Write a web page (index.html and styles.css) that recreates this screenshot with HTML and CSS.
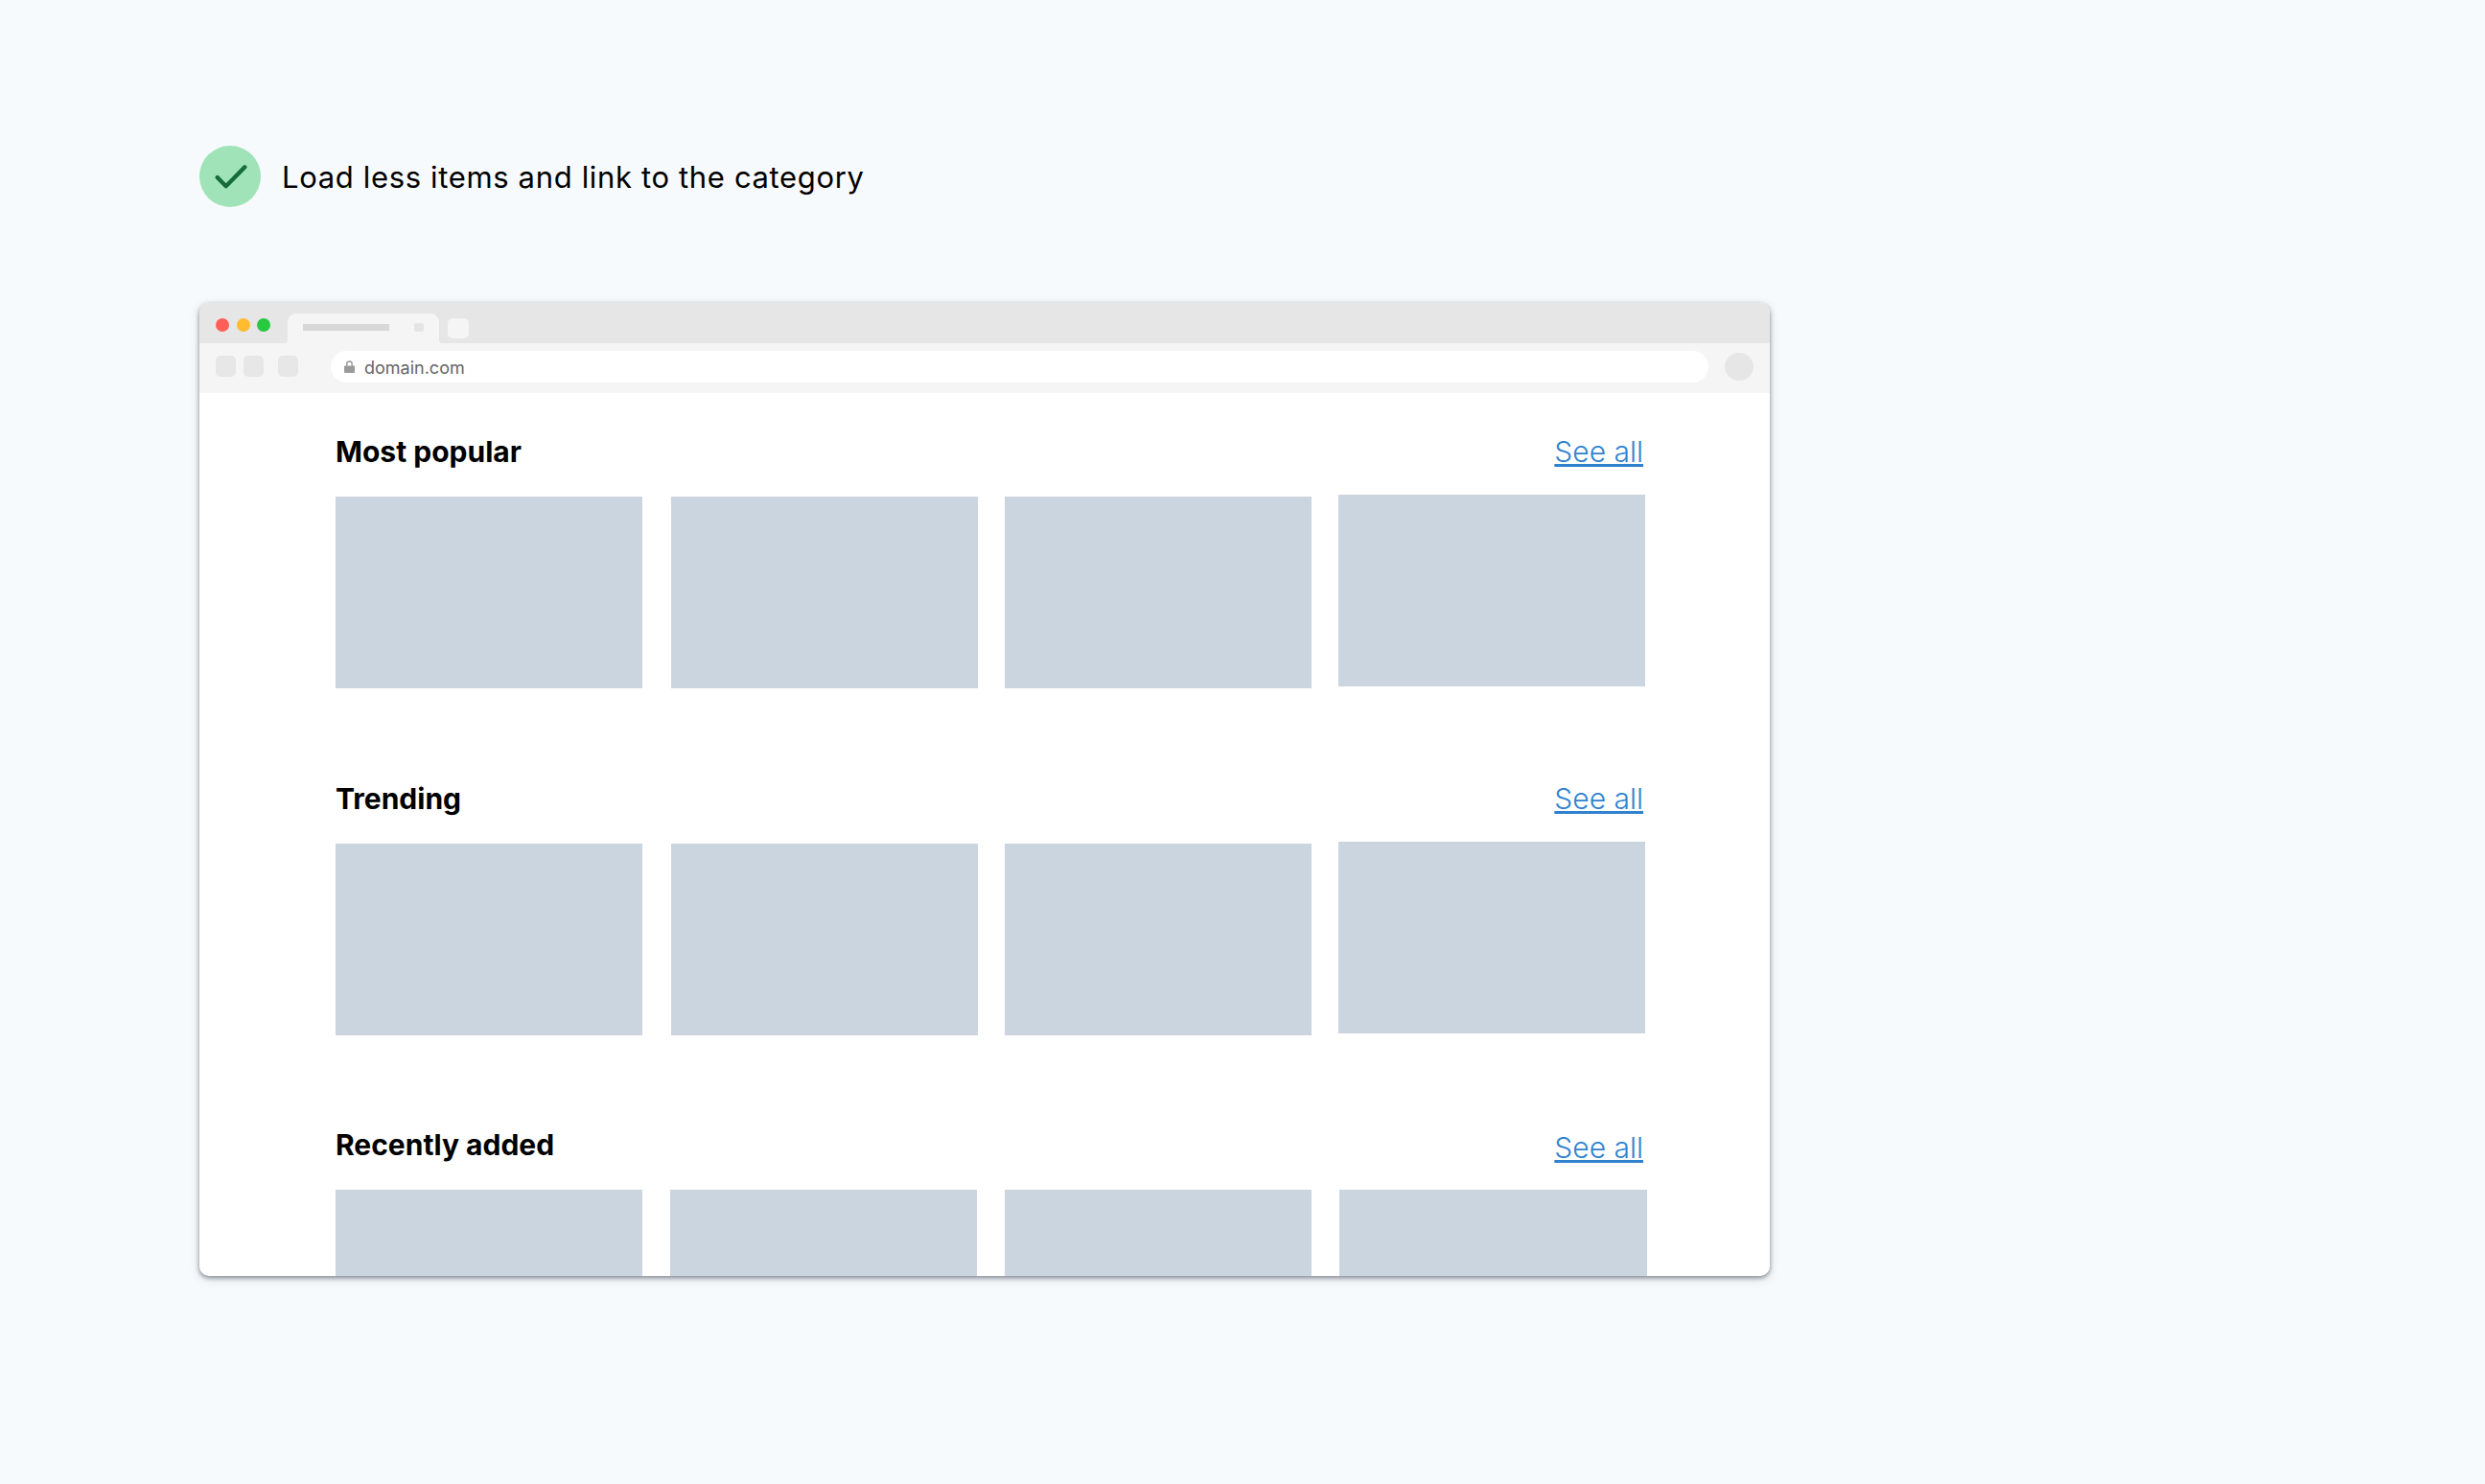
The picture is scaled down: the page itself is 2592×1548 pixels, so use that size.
FILE: index.html
```html
<!DOCTYPE html>
<html lang="en">
<head>
<meta charset="utf-8">
<title>Load less items and link to the category</title>
<link rel="stylesheet" href="styles.css">
</head>
<body>
<header class="caption">
  <span class="badge">
    <svg class="badge-icon" viewBox="0 0 64 64" width="64" height="64" aria-hidden="true"><path d="M18.700 33 L27.700 42.300 L47.300 22.300"/></svg>
  </span>
  <h1 class="caption-text">Load less items and link to the category</h1>
</header>
<main class="window">
  <div class="tabbar">
    <div class="dots"><i class="dot dot-red"></i><i class="dot dot-yellow"></i><i class="dot dot-green"></i></div>
    <div class="tab"><i class="tab-line"></i><i class="tab-close"></i></div>
    <i class="new-tab"></i>
  </div>
  <div class="toolbar">
    <i class="tool"></i><i class="tool"></i><i class="tool tool-last"></i>
    <div class="url">
      <svg class="lock" viewBox="0 0 11 13" width="11" height="13" aria-hidden="true"><path class="lock-body" d="M1 5.500h9a1 1 0 0 1 1 1V12a1 1 0 0 1-1 1H1a1 1 0 0 1-1-1V6.500a1 1 0 0 1 1-1z"/><path class="lock-shackle" d="M2.800 6V3.700a2.700 2.700 0 0 1 5.400 0V6"/></svg>
      <span class="url-text">domain.com</span>
    </div>
    <i class="avatar"></i>
  </div>
  <div class="content">
    <section class="section">
      <div class="section-head"><h2 class="section-title">Most popular</h2><a class="see-all" href="#">See all</a></div>
      <div class="tiles"><i class="tile"></i><i class="tile t2"></i><i class="tile t3"></i><i class="tile t4 raised"></i></div>
    </section>
    <section class="section section-tight">
      <div class="section-head"><h2 class="section-title">Trending</h2><a class="see-all" href="#">See all</a></div>
      <div class="tiles"><i class="tile"></i><i class="tile t2"></i><i class="tile t3"></i><i class="tile t4 raised"></i></div>
    </section>
    <section class="section">
      <div class="section-head"><h2 class="section-title">Recently added</h2><a class="see-all see-all-low" href="#">See all</a></div>
      <div class="tiles"><i class="tile"></i><i class="tile t2b"></i><i class="tile t3b"></i><i class="tile t4b"></i></div>
    </section>
  </div>
</main>
</body>
</html>
```
FILE: styles.css
```css
* { box-sizing: border-box; }
html, body { margin: 0; height: 100%; }
body {
  background: #f7fafc;
  font-family: Inter, "Liberation Sans", sans-serif;
  color: #000;
  padding: 152px 0 0 208px;
  overflow: hidden;
}
i { display: block; }

.caption { display: flex; align-items: center; gap: 22px; height: 64px; margin-bottom: 100px; }
.badge { width: 64px; height: 64px; border-radius: 50%; background: #a0e3b8; display: block; }
.badge-icon { display: block; fill: none; stroke: #146c3c; stroke-width: 4.300; stroke-linecap: round; stroke-linejoin: round; }
.caption-text { margin: 2px 0 0; font-size: 31px; font-weight: 400; letter-spacing: 0.65px; line-height: 40px; }

.window {
  width: 1638px;
  height: 1015px;
  background: #fff;
  border-radius: 10px;
  overflow: hidden;
  box-shadow: 0 2px 5px rgba(45, 55, 72, .55), 0 3px 12px rgba(45, 55, 72, .12);
  display: flex;
  flex-direction: column;
}
.tabbar { height: 42px; background: #e6e6e6; display: flex; align-items: flex-start; flex: none; }
.dots { display: flex; gap: 7.500px; padding: 16px 0 0 17px; width: 92px; }
.dot { width: 14px; height: 14px; border-radius: 50%; }
.dot-red { background: #ff5f57; }
.dot-yellow { background: #febc2e; }
.dot-green { background: #28c840; }
.tab {
  position: relative;
  margin-top: 11px;
  width: 158px;
  height: 31px;
  background: #f5f5f5;
  border-radius: 9px 9px 0 0;
  display: flex;
  padding: 11px 0 0 16px;
}
.tab::before, .tab::after {
  content: "";
  position: absolute;
  bottom: 0;
  width: 4px;
  height: 4px;
}
.tab::before { left: -4px; background: radial-gradient(circle at 0 0, transparent 4px, #f5f5f5 4.500px); }
.tab::after { right: -4px; background: radial-gradient(circle at 100% 0, transparent 4px, #f5f5f5 4.500px); }
.tab-line { width: 90px; height: 7px; background: #d8d8d8; }
.tab-close { width: 10px; height: 9px; margin: -1px 0 0 26px; background: #e4e4e4; border-radius: 2px; }
.new-tab { width: 22px; height: 21px; margin: 16px 0 0 9px; background: #f5f5f5; border-radius: 5px; }

.toolbar { height: 52px; background: #f5f5f5; display: flex; align-items: center; flex: none; padding-left: 17px; }
.tool { width: 21px; height: 22px; border-radius: 5px; background: #e7e7e7; margin: -4px 8px 0 0; }
.tool-last { margin-left: 7px; margin-right: 34px; }
.url { width: 1437px; height: 33px; border-radius: 17px; background: #fff; display: flex; align-items: center; gap: 10px; padding-left: 14px; margin-top: -3px; }
.lock { display: block; flex: none; }
.lock-body { fill: #9a9a9a; }
.lock-shackle { fill: none; stroke: #9a9a9a; stroke-width: 1.400; }
.url-text { font-size: 18px; color: #666; line-height: 24px; position: relative; top: 1px; }
.avatar { width: 30px; height: 29px; border-radius: 50%; background: #e6e6e6; margin: -3px 0 0 17px; }

.content { flex: 1; overflow: hidden; padding: 41px 0 0 142px; }
.section { margin-bottom: 95px; width: 1369px; }
.section-tight { margin-bottom: 94px; }
.section-head { display: flex; justify-content: space-between; height: 40px; margin-bottom: 27px; padding-right: 5px; }
.section-title { margin: 0; font-size: 30px; line-height: 40px; font-weight: 700; }
.see-all { font-size: 30px; line-height: 40px; font-weight: 300; color: #3182ce; text-decoration: underline; text-decoration-thickness: 3px; text-underline-offset: 2px; }
.see-all-low { position: relative; top: 3px; }
.tiles { display: flex; }
.tile { width: 320px; height: 200px; background: #cbd5e0; flex: none; }
.t2 { margin-left: 30px; }
.t3 { margin-left: 28px; }
.t4 { margin-left: 28px; }
.raised { margin-top: -2px; }
.t2b { margin-left: 29px; }
.t3b { margin-left: 29px; }
.t4b { margin-left: 29px; width: 321px; }
```
